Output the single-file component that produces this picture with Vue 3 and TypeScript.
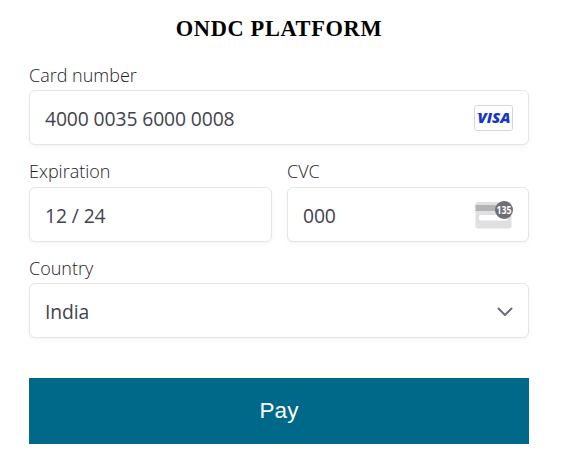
<script setup lang="ts">
import { ref } from 'vue'

const cardNumber = ref('4000 0035 6000 0008')
const expiration = ref('12 / 24')
const cvc = ref('000')
const country = ref('India')
</script>

<template>
  <main class="checkout">
    <h1 class="title">ONDC PLATFORM</h1>
    <form class="form" @submit.prevent>
      <div class="field">
        <span class="label">Card number</span>
        <div class="control">
          <span class="value">{{ cardNumber }}</span>
          <svg class="visa" width="39" height="26" viewBox="0 0 39 26">
            <rect x="0.5" y="0.5" width="38" height="25" rx="2" fill="#fff" stroke="#d6d6d6" />
            <text x="3.500" y="18" textLength="33" lengthAdjust="spacingAndGlyphs">VISA</text>
            <path d="M2.500 8h4l2 3.200c-1.500-1.700-3.500-2.700-6-3.200z" fill="#1434cb" />
          </svg>
        </div>
      </div>
      <div class="row">
        <div class="field">
          <span class="label">Expiration</span>
          <div class="control"><span class="value">{{ expiration }}</span></div>
        </div>
        <div class="field">
          <span class="label">CVC</span>
          <div class="control">
            <span class="value">{{ cvc }}</span>
            <svg class="cvc" width="39" height="28" viewBox="0 0 39 28">
              <rect x="1.500" y="1" width="36" height="26.500" rx="2.500" fill="#e0e0e2" />
              <rect x="1.500" y="4" width="36" height="6" fill="#b4b4b7" />
              <rect x="5" y="14" width="29" height="5.500" rx="1.500" fill="#fff" />
              <circle cx="30" cy="9" r="9" fill="#6d6e78" />
              <text x="30" y="13" text-anchor="middle" textLength="15" lengthAdjust="spacingAndGlyphs">135</text>
            </svg>
          </div>
        </div>
      </div>
      <div class="field">
        <span class="label">Country</span>
        <div class="control">
          <span class="value">{{ country }}</span>
          <svg class="chevron" width="16" height="10" viewBox="0 0 16 10">
            <path d="M1.500 1.500 8 8l6.500-6.500" fill="none" stroke="#6d6e78" stroke-width="2" stroke-linecap="round" stroke-linejoin="round" />
          </svg>
        </div>
      </div>
      <button class="pay" type="submit">Pay</button>
    </form>
  </main>
</template>

<style>
body {
  background: #fff;
}
</style>

<style scoped>
.checkout {
  box-sizing: border-box;
  width: 567px;
  height: 464px;
  padding: 15px 38px 20px 29px;
  font-family: "Open Sans", "Noto Sans", sans-serif;
  color: #42434e;
}
.title {
  margin: 0;
  height: 28px;
  font: bold 22.400px/28px "Liberation Serif", serif;
  letter-spacing: 0.65px;
  text-align: center;
  color: #000;
}
.form {
  display: flex;
  flex-direction: column;
  padding-top: 19px;
}
.field {
  display: flex;
  flex-direction: column;
  margin-bottom: 13px;
}
.label {
  align-self: flex-start;
  height: 28px;
  font-size: 18px;
  font-weight: 300;
  line-height: 27px;
  white-space: nowrap;
  color: #1f202b;
}
.row {
  display: grid;
  grid-template-columns: 243px 242px;
  gap: 15px;
}
.row .label {
  height: 29px;
}
.control {
  box-sizing: border-box;
  height: 55px;
  display: flex;
  align-items: center;
  justify-content: space-between;
  padding: 0 15px;
  border: 1px solid #e6e6e6;
  border-radius: 6px;
  background: #fff;
  box-shadow: 0 1px 2px rgba(0, 0, 0, 0.03), 0 3px 7px rgba(0, 0, 0, 0.025);
}
.value {
  font-size: 19.300px;
  letter-spacing: -0.1px;
  line-height: 28px;
  padding-top: 2px;
}
.visa text {
  font: italic 800 14px "Open Sans", sans-serif;
  fill: #1434cb;
}
.cvc {
  overflow: visible;
}
.cvc text {
  font: 700 11px "Open Sans", sans-serif;
  fill: #fff;
}
.chevron {
  margin-top: 3px;
}
.pay {
  height: 66px;
  margin-top: 27px;
  padding: 0;
  border: 0;
  background: #006989;
  color: #fff;
  font: 22.500px "Liberation Sans", Arial, sans-serif;
}
</style>
